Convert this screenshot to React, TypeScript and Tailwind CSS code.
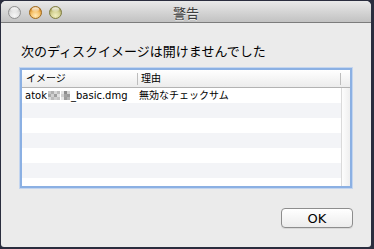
import React from "react";

function Light({ kind }: { kind: "gray" | "orange" | "olive" }) {
  const c = {
    gray: { ring: "#8f8f8f", a: "#f6f6f6", b: "#c9c9c9", c2: "#e4e4e4" },
    orange: { ring: "#9c6a22", a: "#ffe9b8", b: "#d48a26", c2: "#f7c46e" },
    olive: { ring: "#7f7d45", a: "#f0eec0", b: "#a5a15a", c2: "#d6d396" },
  }[kind];
  const id = `g-${kind}`;
  return (
    <svg width="13" height="13" viewBox="0 0 13 13" className="block">
      <defs>
        <radialGradient id={id} cx="50%" cy="75%" r="65%">
          <stop offset="0%" stopColor={c.a} />
          <stop offset="55%" stopColor={c.c2} />
          <stop offset="100%" stopColor={c.b} />
        </radialGradient>
        <linearGradient id={`${id}-h`} x1="0" y1="0" x2="0" y2="1">
          <stop offset="0%" stopColor="#ffffff" stopOpacity="0.9" />
          <stop offset="100%" stopColor="#ffffff" stopOpacity="0.1" />
        </linearGradient>
      </defs>
      <circle cx="6.5" cy="6.5" r="6" fill={`url(#${id})`} stroke={c.ring} strokeWidth="1" />
      <ellipse cx="6.5" cy="3.6" rx="3.6" ry="2.3" fill={`url(#${id}-h)`} />
    </svg>
  );
}

function Blur() {
  const cells: [number, number, string][] = [
    [0, 0, "#c8c8c8"], [3, 0, "#b0b0b0"], [6, 0, "#d8d8d8"], [9, 0, "#bdbdbd"],
    [0, 3, "#a9a9a9"], [3, 3, "#d0d0d0"], [6, 3, "#9f9f9f"], [9, 3, "#e0e0e0"],
    [0, 6, "#dcdcdc"], [3, 6, "#bcbcbc"], [6, 6, "#cfcfcf"], [9, 6, "#c4c4c4"],
    [13, 0, "#e4e4e4"], [16, 0, "#8c8c8c"], [19, 0, "#d6d6d6"],
    [13, 3, "#cfcfcf"], [16, 3, "#a2a2a2"], [19, 3, "#9a9a9a"],
    [13, 6, "#e8e8e8"], [16, 6, "#9c9c9c"], [19, 6, "#b4b4b4"],
  ];
  return (
    <svg width="22" height="9" viewBox="0 0 22 9" className="inline-block align-[-1px]">
      {cells.map(([x, y, f], i) => (
        <rect key={i} x={x} y={y} width="3" height="3" fill={f} />
      ))}
    </svg>
  );
}

export default function App() {
  const rows = Array.from({ length: 7 });
  const cjk = { fontFamily: '"Noto Sans CJK JP", sans-serif' };
  const tbl = { fontFamily: '"DejaVu Sans", "Noto Sans CJK JP", sans-serif' };
  return (
    <div className="w-[374px] h-[249px] bg-[#2a2d3e] pt-[1px] pl-[1px]">
      <div className="w-[370px] h-[246px] bg-[#ebebeb] rounded-t-[5px] rounded-b-[3px] overflow-hidden flex flex-col">
        {/* title bar */}
        <div className="relative h-[22px] shrink-0 border-b border-[#7c7c7c] bg-gradient-to-b from-[#e9e9e9] to-[#c2c2c2] flex items-center">
          <div className="flex items-center gap-[7.5px] pl-[7px] pt-[2px]">
            <Light kind="gray" />
            <Light kind="orange" />
            <Light kind="olive" />
          </div>
          <div
            className="absolute inset-0 flex items-center justify-center pt-[3px] text-[13px] leading-[16px] text-[#3c3c3c] [text-shadow:0_1px_0_rgba(255,255,255,0.6)]"
            style={cjk}
          >
            警告
          </div>
        </div>

        {/* content */}
        <div className="flex flex-col pt-[20px]">
          <div className="pl-[20px] text-[13px] leading-[16px] text-black" style={cjk}>
            次のディスクイメージは開けませんでした
          </div>

          <div className="mt-[9px] ml-[19px] w-[332px] h-[120px] border-2 border-[#8bb0e3] shadow-[0_0_0_1px_#c3d5ef] bg-white overflow-hidden flex flex-col">
            {/* header */}
            <div className="h-[18px] shrink-0 flex items-center border-b border-[#b3b3b3] bg-gradient-to-b from-white to-[#ececec] text-[10px] leading-[12px] text-black" style={tbl}>
              <div className="w-[115px] pl-[4px]">イメージ</div>
              <div className="w-px h-[12px] bg-[#bdbdbd]" />
              <div className="w-[202px] pl-[3px]">理由</div>
              <div className="w-px h-[12px] bg-[#bdbdbd]" />
            </div>
            {/* body */}
            <div className="flex flex-1 min-h-0">
              <div className="w-[319px] flex flex-col">
                {rows.map((_, i) => (
                  <div
                    key={i}
                    className={`h-[15px] shrink-0 flex items-center text-[10px] leading-[12px] text-black ${i % 2 === 0 ? "bg-white" : "bg-[#f3f4f7]"}`}
                    style={tbl}
                  >
                    {i === 0 && (
                      <>
                        <div className="w-[115px] pl-[3px] whitespace-nowrap flex items-center">
                          <span>atok</span>
                          <span className="mx-[1px]"><Blur /></span>
                          <span>_basic.dmg</span>
                        </div>
                        <div className="pl-[2px] whitespace-nowrap">無効なチェックサム</div>
                      </>
                    )}
                  </div>
                ))}
              </div>
              <div className="flex-1 border-l border-[#dadada] bg-gradient-to-r from-[#fdfdfd] to-[#efefef]" />
            </div>
          </div>

          <div className="mt-[20px] ml-[280px] w-[72px] h-[20px] rounded-[4px] border border-[#8d8d8d] bg-gradient-to-b from-white to-[#ececec] shadow-[0_1px_0_rgba(0,0,0,0.08)] flex items-center justify-center">
            <span className="text-[13px] leading-[15px] text-black" style={{ fontFamily: '"DejaVu Sans", sans-serif' }}>
              OK
            </span>
          </div>
        </div>
      </div>
    </div>
  );
}
